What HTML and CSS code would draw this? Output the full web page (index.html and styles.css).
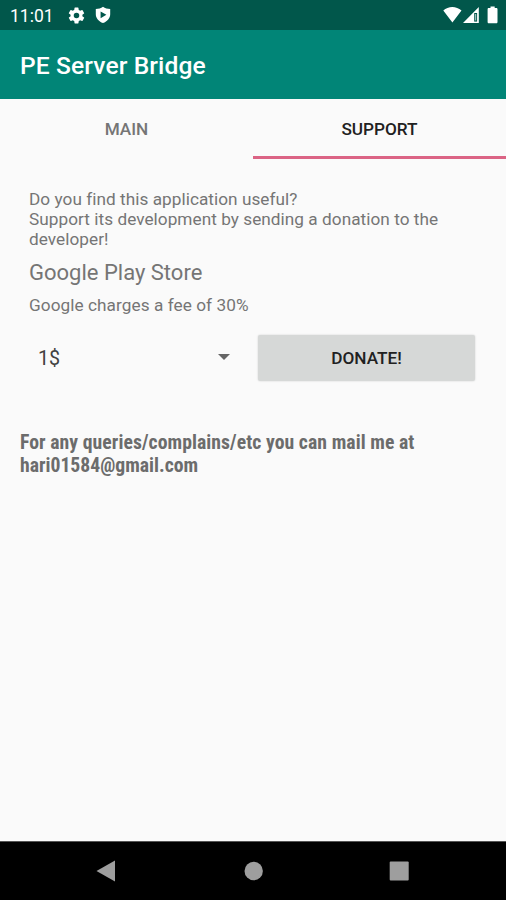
FILE: index.html
```html
<!DOCTYPE html>
<html lang="en">
<head>
<meta charset="utf-8">
<title>PE Server Bridge</title>
<link rel="stylesheet" href="styles.css">
</head>
<body>
<div class="status">
  <span class="clock">11:01</span>
  <svg class="gear" width="19" height="19" viewBox="0 0 24 24"><path fill="#fff" fill-rule="evenodd" d="M19.4 13a7.500 7.500 0 0 0 0-2l2.100-1.650a.5.5 0 0 0 .12-.64l-2-3.460a.5.5 0 0 0-.61-.22l-2.490 1a7.300 7.300 0 0 0-1.690-.98l-.38-2.650A.49.49 0 0 0 14 2h-4a.49.49 0 0 0-.49.42l-.38 2.650c-.61.25-1.170.59-1.690.98l-2.490-1a.49.49 0 0 0-.61.22l-2 3.460a.49.49 0 0 0 .12.64L4.570 11a7.900 7.900 0 0 0 0 2l-2.110 1.650a.5.5 0 0 0-.12.64l2 3.460c.12.22.39.3.61.22l2.490-1c.52.4 1.080.73 1.690.98l.38 2.650c.03.24.24.42.49.42h4c.25 0 .46-.18.49-.42l.38-2.650c.61-.25 1.170-.59 1.690-.98l2.490 1c.23.09.49 0 .61-.22l2-3.460a.5.5 0 0 0-.12-.64zM12 15.500a3.500 3.500 0 1 1 0-7 3.500 3.500 0 0 1 0 7z"/></svg>
  <svg class="shield" width="16" height="18" viewBox="0 0 16 18"><path fill="#fff" fill-rule="evenodd" d="M8 .8C6 2.300 3.500 3 .8 3v5.300c0 4 2.800 7.200 7.200 8.800 4.400-1.600 7.200-4.800 7.200-8.800V3C12.500 3 10 2.300 8 .8zM5.600 5.400v6.800L11.400 8.800z"/></svg>
  <svg class="radios" width="56" height="18" viewBox="0 0 56 18"><path fill="#fff" d="M1.300 4.500C6.300-.2 14.300-.2 19.500 4.500L10.400 16.500zM36.800 1v16H21zM48.500.6h4.200v1.500h1.500c.8 0 1.300.5 1.300 1.200v12.700c0 .7-.5 1.300-1.300 1.300h-7.300c-.8 0-1.300-.6-1.300-1.300V3.300c0-.7.5-1.200 1.300-1.200h1.600z"/><path fill="#01574b" d="M32.200 7h2.900v8.600h-2.900z"/><path fill="#a9c6c2" d="M33.100 8h1.100v6.500h-1.100z"/></svg>
</div>
<header class="appbar"><h1>PE Server Bridge</h1></header>
<nav class="tabs"><div class="tab"><span>MAIN</span></div><div class="tab active"><span>SUPPORT</span></div></nav>
<main>
  <section class="donation">
    <p class="intro">Do you find this application useful?<br>Support its development by sending a donation to the<br>developer!</p>
    <h2>Google Play Store</h2>
    <p class="fee">Google charges a fee of 30%</p>
    <div class="controls">
      <div class="spinner"><span>1$</span><svg width="12" height="6" viewBox="0 0 12 6"><path fill="#656565" d="M0 0h12L6 6z"/></svg></div>
      <button type="button">DONATE!</button>
    </div>
  </section>
  <p class="contact"><span class="question">For any queries/complains/etc you can mail me at</span><br>hari01584@gmail.com</p>
</main>
<footer class="navbar">
  <svg width="506" height="58" viewBox="0 0 506 58"><g fill="#9e9e9e"><path d="M96.500 29 115 18.500v21z"/><circle cx="253.700" cy="29" r="9.200"/><rect x="389.700" y="19.500" width="19" height="19" rx="1"/></g></svg>
</footer>
</body>
</html>
```
FILE: styles.css
```css
* { box-sizing: border-box; }
body {
  margin: 0;
  height: 900px;
  display: flex;
  flex-direction: column;
  overflow: hidden;
  background: #fafafa;
  color: #757575;
  font-family: Roboto, "Liberation Sans", sans-serif;
}
h1, h2, p { margin: 0; font-weight: 400; }
svg { display: block; flex: none; }
.status {
  height: 30px;
  flex: none;
  display: flex;
  align-items: center;
  padding: 0 8px 0 10px;
  background: #01574b;
  color: #fff;
}
.clock { width: 56px; font-size: 17.5px; line-height: 30px; padding-top: 2px; }
.gear { margin-left: 0.5px; }
.shield { margin-left: 9.5px; }
.radios { margin-left: auto; }
.appbar {
  height: 68.500px;
  flex: none;
  padding: 0 20px;
  background: #018577;
  color: #fff;
}
.appbar h1 { font-size: 24.6px; font-weight: 500; line-height: 71px; letter-spacing: 0.1px; white-space: nowrap; }
.tabs { display: flex; height: 60px; flex: none; }
.tab { flex: 1; text-align: center; font-size: 17.2px; line-height: 61px; font-weight: 500; }
.active { color: #212121; border-bottom: 3px solid #db6485; }
main { flex: 1; padding: 30px 20px 0; }
.donation { padding: 0 11px 0 9px; }
.intro { font-size: 17.2px; line-height: 20.2px; letter-spacing: 0.045px; white-space: nowrap; }
h2 { font-size: 22px; line-height: 26px; margin-top: 11px; }
.fee { font-size: 17.2px; line-height: 20px; margin-top: 9px; letter-spacing: 0.07px; }
.controls { display: flex; margin-top: 20px; }
.spinner {
  width: 229px;
  height: 46px;
  display: flex;
  align-items: center;
  justify-content: space-between;
  padding: 0 28px 0 9px;
  font-size: 19.7px;
  color: #424242;
}
.spinner svg { margin-top: -2px; }
button {
  flex: 1;
  height: 46px;
  border: 0;
  border-radius: 2px;
  background: #d6d8d7;
  box-shadow: 0 0 2px #cfcfcf;
  color: #212121;
  font: 500 17.2px Roboto, sans-serif;
}
.contact {
  margin-top: 50px;
  font-family: "Roboto Condensed", Roboto, sans-serif;
  font-size: 19.7px;
  line-height: 23px;
  font-weight: 700;
  color: #6c6c6c;
  white-space: nowrap;
}
.question { letter-spacing: 0.06px; }
.navbar { height: 59px; flex: none; background: #000; border-top: 1px solid #555; }
```
